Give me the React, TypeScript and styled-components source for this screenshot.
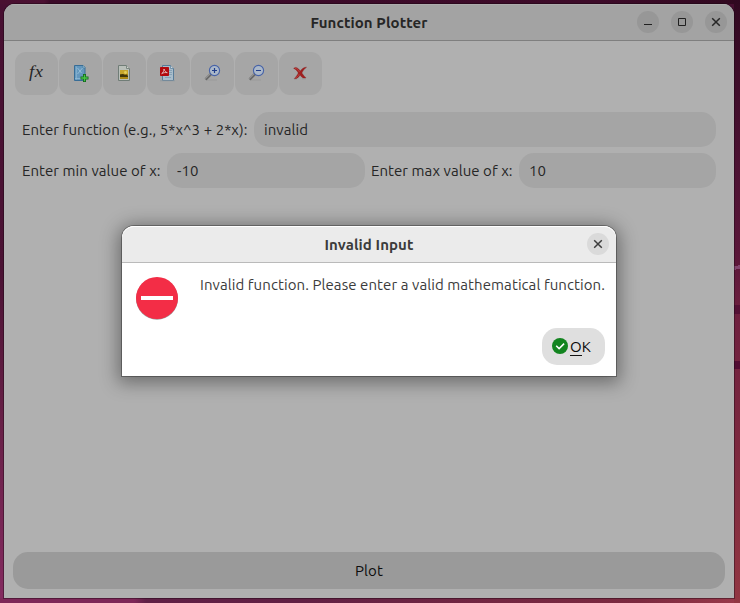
import React from "react";
import styled, { createGlobalStyle } from "styled-components";

const GlobalStyle = createGlobalStyle`
  * { box-sizing: border-box; }
  body { margin: 0; overflow: hidden; }
  button, input { font: inherit; color: inherit; border: 0; padding: 0; margin: 0; outline: none; letter-spacing: inherit; }
`;

const Desktop = styled.div`
  position: relative;
  width: 740px;
  height: 603px;
  padding: 4px 6px 5px 4px;
  overflow: hidden;
  font-family: Ubuntu, "Noto Sans", sans-serif;
  font-size: 15px;
  letter-spacing: 0.08px;
  color: #262626;
  background:
    linear-gradient(168deg, transparent 28%, #83466f 29%, #83466f 71%, transparent 72%) 734px 264px / 6px 7px no-repeat,
    linear-gradient(#541035, #541035) 734px 305px / 6px 9px no-repeat,
    linear-gradient(#520c33, #520c33) 734px 361px / 6px 8px no-repeat,
    linear-gradient(#300820 0, #3d0c29 12%, #4d1233 28%, #5a1639 42%, #6f203f 53%, #7d293f 75%, #923642 100%) 734px 0 / 6px 603px no-repeat,
    linear-gradient(90deg, #7e2758 0, #7e2758 134px, #602046 146px, #612044 300px, #742742 500px, #7c2a40 640px, #99394a 740px) 0 598px / 740px 5px no-repeat,
    linear-gradient(90deg, #491030 0, #4b1032 44px, #3b0a28 50px, #3d0b29 600px, #30081f 740px) 0 0 / 740px 4px no-repeat,
    linear-gradient(#470f31 0, #4b1234 45%, #682047 70%, #842b60 100%);
`;

const Window = styled.main`
  height: 594px;
  display: flex;
  flex-direction: column;
  background: #b0b0b0;
  border-radius: 11px 11px 0 0;
  box-shadow: 0 0 0 1px rgba(20, 5, 15, 0.4);
  overflow: hidden;
`;

const TitleBar = styled.header`
  display: grid;
  grid-template-columns: 1fr auto 1fr;
  align-items: center;
  height: 37px;
  flex: none;
  padding: 0 7px;
  background: #a3a3a3;
  border-bottom: 1px solid #7f7f7f;
  box-shadow: inset 0 1px #adadad;
`;

const Title = styled.h1`
  grid-column: 2;
  margin: 2px 0 0;
  font-size: 15px;
  line-height: 20px;
  font-weight: 700;
  letter-spacing: 0.09px;
  white-space: nowrap;
`;

const Controls = styled.div`
  display: flex;
  justify-content: flex-end;
  gap: 12px;
  margin-top: -1px;
`;

const RoundButton = styled.button<{ $light?: boolean }>`
  width: 22px;
  height: 22px;
  border-radius: 50%;
  background: ${(p) => (p.$light ? "#dadada" : "#979797")};
  svg { display: block; width: 22px; height: 22px; }
`;

const Toolbar = styled.div`
  display: flex;
  gap: 1px;
  padding: 11px 11px 0;
`;

const ToolButton = styled.button`
  width: 43px;
  height: 43px;
  padding: 0 1px 1px 0;
  border-radius: 11px;
  background: #a6a6a6;
  display: grid;
  place-items: center;
  svg { display: block; width: 18px; height: 18px; overflow: visible; }
`;

const FunctionMark = styled.span`
  font-family: "Liberation Serif", serif;
  font-style: italic;
  font-size: 16px;
  line-height: 18px;
  letter-spacing: 0.4px;
  transform: translateY(-1px) scaleX(1.15);
`;

const Form = styled.form`
  display: flex;
  flex-direction: column;
  gap: 6px;
  padding: 17px 18px 0;
`;

const FormRow = styled.div<{ $columns: string }>`
  display: grid;
  grid-template-columns: ${(p) => p.$columns};
  align-items: center;
  height: 35px;
`;

const Label = styled.label`
  white-space: nowrap;
  line-height: 20px;
  letter-spacing: 0.06px;
`;

const Field = styled.input`
  width: 100%;
  min-width: 0;
  height: 35px;
  padding: 0 10px;
  border-radius: 15px;
  background: #a5a5a5;
`;

const PlotButton = styled.button`
  height: 37px;
  margin: auto 9px 9px;
  border-radius: 15px;
  background: #9a9a9a;
  color: #0d0d0d;
  flex: none;
`;

const Dialog = styled.section`
  position: absolute;
  left: 122px;
  top: 226px;
  width: 494px;
  height: 150px;
  background: #fff;
  color: #3b3b3b;
  border-radius: 12px 12px 0 0;
  box-shadow: 0 0 0 1px rgba(0, 0, 0, 0.3), 0 3px 18px 4px rgba(0, 0, 0, 0.38);
`;

const DialogHeader = styled(TitleBar)`
  background: #ebebeb;
  border-bottom-color: #bababa;
  border-radius: 12px 12px 0 0;
  box-shadow: inset 0 1px #fff;
`;

const DialogBody = styled.div`
  display: grid;
  grid-template-columns: 44px 1fr;
  column-gap: 21px;
  padding: 12px 11px 0 13px;
  > svg { width: 44px; height: 46px; }
`;

const Message = styled.p`
  margin: 0;
  line-height: 20px;
  white-space: nowrap;
`;

const Actions = styled.div`
  display: flex;
  justify-content: flex-end;
  padding: 7px 11px 0;
`;

const OkButton = styled.button`
  display: flex;
  align-items: center;
  width: 63px;
  height: 37px;
  padding: 0 10px;
  gap: 2px;
  border-radius: 15px;
  background: #dfdfdf;
  color: #0a0a0a;
  svg { width: 16px; height: 16px; flex: none; margin-top: -1px; }
`;

const Mnemonic = styled.span`
  border-bottom: 1px solid #111;
  display: inline-block;
  line-height: 16px;
`;

const OkLabel = styled.span`
  padding-top: 1px;
`;

const CloseIcon = ({ color }: { color: string }) => (
  <svg viewBox="0 0 22 22" aria-hidden="true">
    <path d="M7.2 7.2 14.8 14.8M14.8 7.2 7.2 14.8" stroke={color} strokeWidth="1.5" />
  </svg>
);

const AddPlotIcon = () => (
  <svg viewBox="0 0 18 18" aria-hidden="true">
    <path d="M3.5 1.5h8.5l2 2v13H3.5z" fill="#6497bd" stroke="#386d96" />
    <path d="M5.3 2.5v13M4 14.5h9" stroke="#91bad4" strokeWidth=".8" />
    <path d="M6.5 4l4 5M6.5 10l5-6" stroke="#98bfd8" strokeWidth=".9" />
    <path d="M12 1.5v2.5h2" fill="#a0c5d9" stroke="#477899" strokeWidth=".6" />
    <path d="M12 10h3v2.5h2.5v3H15V18h-3v-2.5H9.5v-3H12z" fill="#126a1d" />
    <path d="M13.5 10.8v6.4M10.3 14h6.4" stroke="#48c545" strokeWidth="1.3" />
  </svg>
);

const ImageFileIcon = () => (
  <svg viewBox="0 0 18 18" aria-hidden="true">
    <path d="M3.5 1.5h8l3 3v12h-11z" fill="#b9bfb9" stroke="#707d77" />
    <path d="M11.5 1.5v3h3" fill="#cfd3ce" stroke="#7b8781" />
    <path d="M5 6h8v9H5z" fill="#aa8714" />
    <path d="M5 6h8v4H5z" fill="#c6a52c" />
    <path d="M5 10.5l3-.5 2 1 1.5-.6L13 12v1H5z" fill="#40360b" />
    <circle cx="10.5" cy="8.5" r="1.4" fill="#e5cf57" />
  </svg>
);

const PdfIcon = () => (
  <svg viewBox="0 0 18 18" aria-hidden="true">
    <path d="M3.5 1.5h8l3 3v12h-11z" fill="#a9bdcb" stroke="#577b98" />
    <path d="M11.5 1.5v3h3" fill="#ced8de" stroke="#577b98" strokeWidth=".7" />
    <path d="M10 6.5h3M10 8.5h3M10 10.5h3M6 13.5h6" stroke="#7d9ab0" strokeWidth=".8" />
    <rect x="1" y="3" width="9" height="9" rx=".8" fill="#b2090e" />
    <path d="M5 5c.4 1.8 1.7 3.2 3.3 3.7C6.4 8.3 4.5 8.6 2.7 9.6 4.3 8.4 5 6.8 5 5z" fill="none" stroke="#e3c5c5" strokeWidth=".9" />
    <path d="M1 16.7h15" stroke="#89969e" strokeWidth=".7" />
  </svg>
);

const MagnifierIcon = ({ plus }: { plus?: boolean }) => (
  <svg viewBox="0 0 18 18" aria-hidden="true">
    <path d="M4 16h10" stroke="#8c8c8c" strokeWidth="1" opacity=".45" />
    <path d="M8 10 2.5 15.5" stroke="#666" strokeWidth="2.5" />
    <path d="M7.4 9.8 2.3 14.9" stroke="#a9a9a9" strokeWidth=".8" />
    <circle cx="11.5" cy="6.5" r="5.1" fill="#abb8c9" stroke="#4864a8" strokeWidth="1.1" />
    <path d={plus ? "M9 6.5h5M11.5 4v5" : "M9 6.5h5"} stroke="#203d8a" strokeWidth="1.2" />
  </svg>
);

const DeleteIcon = () => (
  <svg viewBox="0 0 18 18" aria-hidden="true">
    <path d="M3 15h3M11 14.8h4" stroke="#969696" />
    <path d="M2.6 4.4C4.6 2.3 7.2 3.8 9.2 7 11 4.7 13 3 15.6 3.2 13.4 4.8 12 6.6 10.9 9c1.2 1.9 2.4 3.3 4.1 4.8-2.6 1-4.5-.6-6-2.9-1.4 2.2-3 4.4-5.8 3.7C4.8 13 6 11.3 7.3 8.9 6 6.8 4.8 5.2 2.6 4.4z" fill="#a01f1f" stroke="#7d1a1a" strokeWidth=".3" />
    <path d="M4 4.2c2 .2 3.2 2 4.6 3.9M4.5 13.8c1.8-.5 3-2.4 3.8-3.8" fill="none" stroke="#c5504c" strokeWidth=".7" />
  </svg>
);

export default function App() {
  return (
    <Desktop>
      <GlobalStyle />
      <Window>
        <TitleBar>
          <Title>Function Plotter</Title>
          <Controls>
            <RoundButton aria-label="Minimize">
              <svg viewBox="0 0 22 22"><path d="M7 13.5h8" stroke="#202020" /></svg>
            </RoundButton>
            <RoundButton aria-label="Maximize">
              <svg viewBox="0 0 22 22"><path d="M7.5 7.5h7v7h-7z" fill="none" stroke="#202020" /></svg>
            </RoundButton>
            <RoundButton aria-label="Close"><CloseIcon color="#262626" /></RoundButton>
          </Controls>
        </TitleBar>
        <Toolbar>
          <ToolButton aria-label="Function"><FunctionMark>fx</FunctionMark></ToolButton>
          <ToolButton aria-label="Add plot"><AddPlotIcon /></ToolButton>
          <ToolButton aria-label="Save image"><ImageFileIcon /></ToolButton>
          <ToolButton aria-label="Save PDF"><PdfIcon /></ToolButton>
          <ToolButton aria-label="Zoom in"><MagnifierIcon plus /></ToolButton>
          <ToolButton aria-label="Zoom out"><MagnifierIcon /></ToolButton>
          <ToolButton aria-label="Clear"><DeleteIcon /></ToolButton>
        </Toolbar>
        <Form>
          <FormRow $columns="232px 462px">
            <Label htmlFor="fn">Enter function (e.g., 5*x^3 + 2*x):</Label>
            <Field id="fn" defaultValue="invalid" />
          </FormRow>
          <FormRow $columns="145px 198px 6px 148px 197px">
            <Label htmlFor="min">Enter min value of x:</Label>
            <Field id="min" defaultValue="-10" />
            <span />
            <Label htmlFor="max">Enter max value of x:</Label>
            <Field id="max" defaultValue="10" />
          </FormRow>
        </Form>
        <PlotButton>Plot</PlotButton>
      </Window>
      <Dialog role="dialog" aria-label="Invalid Input">
        <DialogHeader>
          <Title>Invalid Input</Title>
          <Controls>
            <RoundButton $light aria-label="Close"><CloseIcon color="#3d3d3d" /></RoundButton>
          </Controls>
        </DialogHeader>
        <DialogBody>
          <svg viewBox="0 0 44 46" aria-hidden="true">
            <circle cx="22" cy="23.7" r="21" fill="#999" />
            <circle cx="22" cy="23" r="21" fill="#f32d46" />
            <path d="M6 23h32" stroke="#fff" strokeWidth="4" />
          </svg>
          <Message>Invalid function. Please enter a valid mathematical function.</Message>
        </DialogBody>
        <Actions>
          <OkButton>
            <svg viewBox="0 0 16 16" aria-hidden="true">
              <circle cx="8" cy="8" r="8" fill="#12841f" />
              <path d="m4.2 7.8 2.9 2.8 5-5" fill="none" stroke="#fff" strokeWidth="1.5" />
            </svg>
            <OkLabel><Mnemonic>O</Mnemonic>K</OkLabel>
          </OkButton>
        </Actions>
      </Dialog>
    </Desktop>
  );
}
